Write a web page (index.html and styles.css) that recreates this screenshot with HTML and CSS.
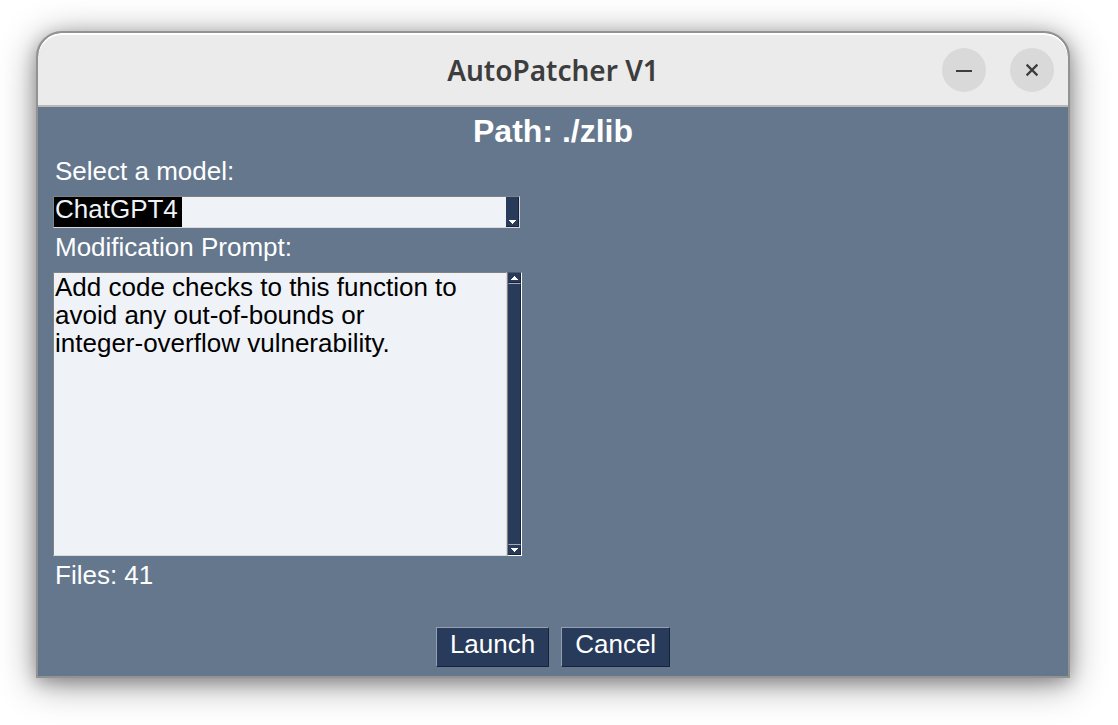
FILE: index.html
```html
<!DOCTYPE html>
<html lang="en">
<head>
<meta charset="utf-8">
<title>AutoPatcher V1</title>
<link rel="stylesheet" href="styles.css">
</head>
<body>
<main class="window">
  <header class="titlebar">
    <h1 class="title">AutoPatcher V1</h1>
    <div class="controls">
      <button class="control" type="button" aria-label="Minimize">
        <svg width="16" height="16" viewBox="0 0 16 16"><path d="M0 9h16" stroke="#3d3d3d" stroke-width="2"/></svg>
      </button>
      <button class="control" type="button" aria-label="Close">
        <svg width="16" height="16" viewBox="0 0 16 16"><path d="M2.6 2.6l10.8 10.8M13.4 2.6L2.6 13.4" stroke="#3d3d3d" stroke-width="2.2"/></svg>
      </button>
    </div>
  </header>
  <form class="content">
    <h2 class="path">Path: ./zlib</h2>
    <label class="label" for="model">Select a model:</label>
    <div class="combo">
      <select class="combo-field" id="model"><option>ChatGPT4</option></select>
      <span class="combo-arrow"><svg width="7" height="4" viewBox="0 0 7 4" shape-rendering="crispEdges"><path d="M0 0h7v1H0zM1 1h5v1H1zM2 2h3v1H2zM3 3h1v1H3z" fill="#fff"/></svg></span>
    </div>
    <label class="label" for="prompt">Modification Prompt:</label>
    <div class="editor">
      <textarea class="prompt" id="prompt" spellcheck="false">Add code checks to this function to
avoid any out-of-bounds or
integer-overflow vulnerability.</textarea>
      <div class="scrollbar">
        <button class="scroll-arrow" type="button" aria-label="Scroll up"><svg width="7" height="4" viewBox="0 0 7 4" shape-rendering="crispEdges"><path d="M3 0h1v1H3zM2 1h3v1H2zM1 2h5v1H1zM0 3h7v1H0z" fill="#fff"/></svg></button>
        <div class="thumb"></div>
        <button class="scroll-arrow" type="button" aria-label="Scroll down"><svg width="7" height="4" viewBox="0 0 7 4" shape-rendering="crispEdges"><path d="M0 0h7v1H0zM1 1h5v1H1zM2 2h3v1H2zM3 3h1v1H3z" fill="#fff"/></svg></button>
      </div>
    </div>
    <p class="label">Files: 41</p>
    <div class="actions">
      <button class="action" type="button">Launch</button>
      <button class="action" type="button">Cancel</button>
    </div>
  </form>
</main>
</body>
</html>
```
FILE: styles.css
```css
* {
  box-sizing: border-box;
}

body {
  margin: 0;
  min-height: 100vh;
  display: flex;
  padding: 31px 48px 47px 36px;
  background: #fff;
  font: 26px/28px "Liberation Sans", Arial, sans-serif;
}

h1, h2, p {
  margin: 0;
}

button, select, textarea {
  font: inherit;
  margin: 0;
  border-radius: 0;
}

svg {
  display: block;
}

.window {
  flex: 1;
  display: flex;
  flex-direction: column;
  overflow: hidden;
  border: 2px solid #929292;
  border-radius: 26px 26px 0 0;
  background: #64778d;
  box-shadow: 0 6px 36px rgba(0, 0, 0, 0.42), 0 4px 16px rgba(0, 0, 0, 0.24);
}

.titlebar {
  display: grid;
  grid-template-columns: 1fr auto 1fr;
  align-items: center;
  height: 74px;
  padding: 2px 14px 0;
  background: #ebebeb;
  border-bottom: 2px solid #b9b9b9;
  box-shadow: inset 0 2px #fff;
  border-radius: 24px 24px 0 0;
}

.title {
  grid-column: 2;
  font: 600 28px/36px "Noto Sans", "Open Sans", sans-serif;
  color: #3d3d3d;
}

.controls {
  display: flex;
  justify-content: flex-end;
  gap: 24px;
}

.control {
  display: flex;
  align-items: center;
  justify-content: center;
  width: 44px;
  height: 44px;
  padding: 0;
  border: 0;
  border-radius: 50%;
  background: #d9d9d9;
}

.content {
  flex: 1;
  display: flex;
  flex-direction: column;
  padding: 6px 15px 9px;
  color: #fff;
}

.path {
  margin-bottom: 3px;
  font-size: 32px;
  line-height: 36px;
  text-align: center;
}

.label {
  padding: 5px 2px 11px;
  align-self: flex-start;
}

.combo {
  display: grid;
  grid-template-columns: 1fr 13px;
  width: 467px;
  max-width: 100%;
  height: 32px;
  border: 1px solid;
  border-color: #828282 #d9d9d9 #d9d9d9 #828282;
  background: #eff2f7;
}

.combo-field {
  grid-area: 1 / 1 / 2 / 3;
  appearance: none;
  padding: 0 1px 6px;
  border: 0;
  outline: 0;
  line-height: 24px;
  color: #eff2f7;
  background: linear-gradient(#000, #000) 0 0 / 128px 100% no-repeat;
}

.combo-arrow {
  grid-area: 1 / 2;
  display: flex;
  align-items: flex-end;
  justify-content: center;
  padding-bottom: 2px;
  background: #283b5b;
  border-right: 1px solid #18233a;
  border-bottom: 1px solid #18233a;
  pointer-events: none;
}

.editor {
  display: flex;
  width: 469px;
  max-width: 100%;
  height: 284px;
}

.prompt {
  flex: 1;
  min-width: 0;
  padding: 0 1px;
  border: 1px solid;
  border-color: #828282 #d9d9d9 #d9d9d9 #828282;
  outline: 0;
  resize: none;
  overflow: hidden;
  line-height: 28px;
  color: #000;
  background: #eff2f7;
}

.scrollbar {
  display: flex;
  flex-direction: column;
  width: 15px;
  border: 1px solid;
  border-color: #4b596a #fff #fff #828282;
  background: #283b5b;
}

.scroll-arrow {
  display: flex;
  align-items: center;
  justify-content: center;
  height: 10px;
  padding: 0;
  border: 1px solid;
  border-color: #283b5b #18233a #18233a #283b5b;
  background: #283b5b;
}

.thumb {
  flex: 1;
  border: 1px solid;
  border-color: #a3abb8 #18233a #a3abb8 #283b5b;
}

.actions {
  display: flex;
  justify-content: center;
  gap: 12px;
  margin-top: auto;
}

.action {
  height: 40px;
  padding: 0 13px 6px;
  border: 1px solid;
  border-color: #94a0b1 #18233a #18233a #94a0b1;
  color: #fff;
  background: #283b5b;
}
```
